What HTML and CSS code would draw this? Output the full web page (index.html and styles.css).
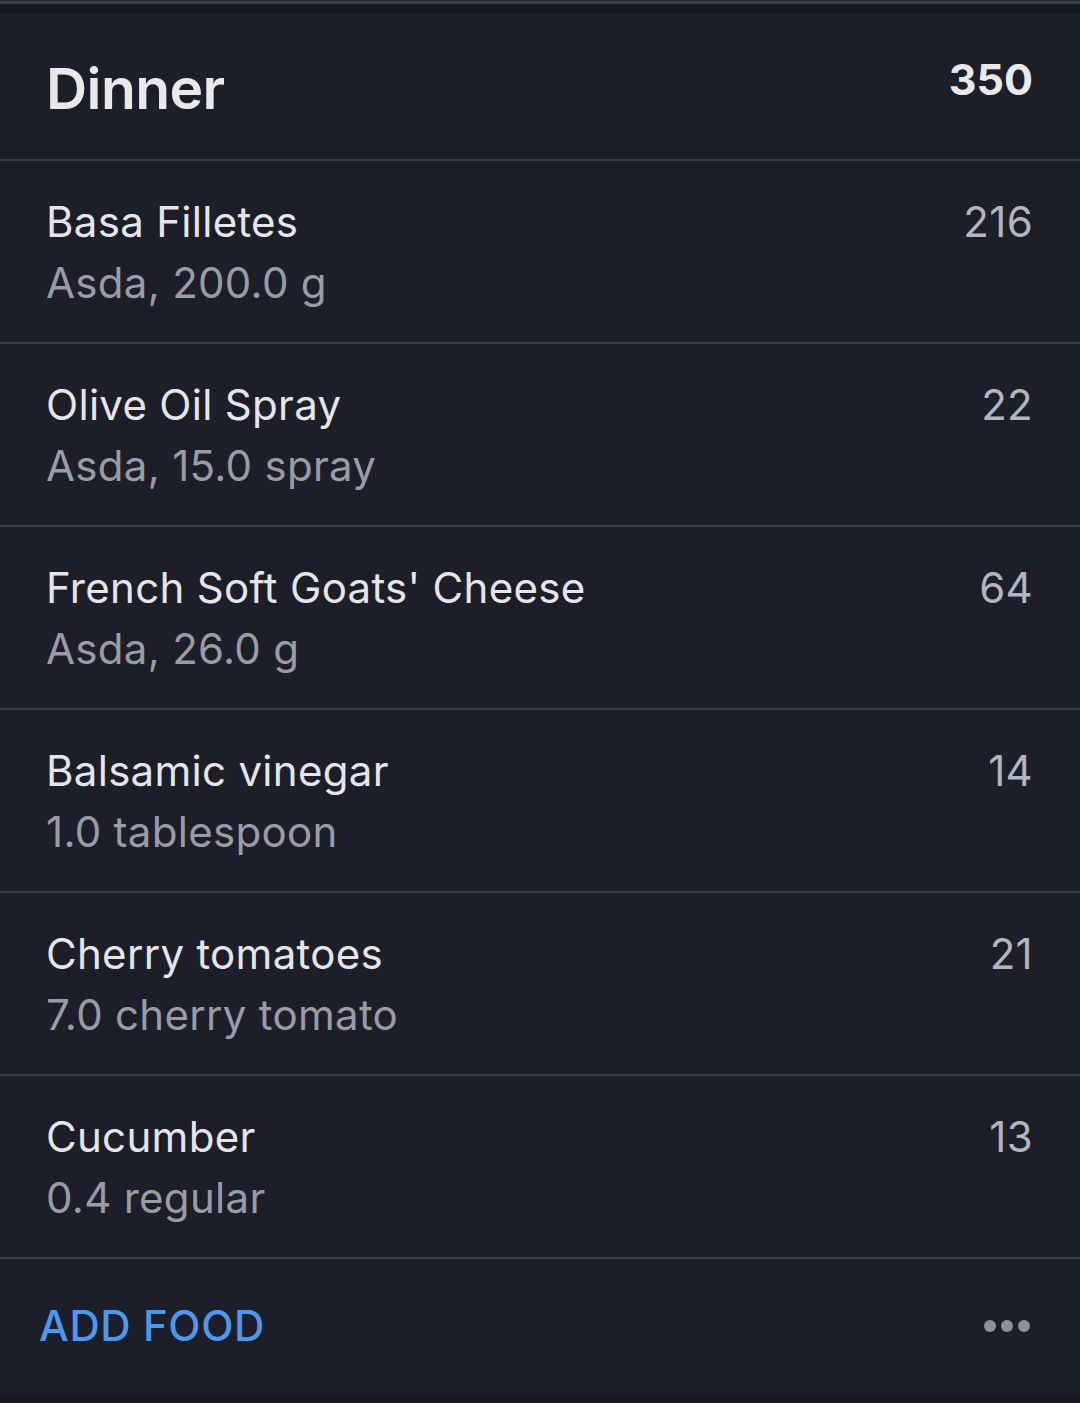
FILE: index.html
```html
<!DOCTYPE html>
<html>
<head>
<meta charset="utf-8">
<link rel="stylesheet" href="styles.css">
</head>
<body>
<div class="topline"></div>
<div class="topstrip"></div>
<section class="meal">
  <header class="meal-head">
    <h1 class="meal-title">Dinner</h1>
    <span class="meal-total">350</span>
  </header>
  <div class="item">
    <div class="item-text">
      <div class="item-name">Basa Filletes</div>
      <div class="item-desc">Asda, 200.0 g</div>
    </div>
    <div class="item-cal">216</div>
  </div>
  <div class="item">
    <div class="item-text">
      <div class="item-name">Olive Oil Spray</div>
      <div class="item-desc">Asda, 15.0 spray</div>
    </div>
    <div class="item-cal">22</div>
  </div>
  <div class="item">
    <div class="item-text">
      <div class="item-name">French Soft Goats' Cheese</div>
      <div class="item-desc">Asda, 26.0 g</div>
    </div>
    <div class="item-cal">64</div>
  </div>
  <div class="item">
    <div class="item-text">
      <div class="item-name">Balsamic vinegar</div>
      <div class="item-desc">1.0 tablespoon</div>
    </div>
    <div class="item-cal">14</div>
  </div>
  <div class="item">
    <div class="item-text">
      <div class="item-name">Cherry tomatoes</div>
      <div class="item-desc">7.0 cherry tomato</div>
    </div>
    <div class="item-cal">21</div>
  </div>
  <div class="item">
    <div class="item-text">
      <div class="item-name">Cucumber</div>
      <div class="item-desc">0.4 regular</div>
    </div>
    <div class="item-cal">13</div>
  </div>
  <footer class="meal-foot">
    <span class="add-food">ADD FOOD</span>
    <span class="more"><i></i><i></i><i></i></span>
  </footer>
</section>
<div class="bottomstrip"></div>
</body>
</html>
```
FILE: styles.css
```css
html, body {
  margin: 0;
  padding: 0;
  background: #1c1e29;
  font-family: Inter, "Noto Sans", sans-serif;
}
body {
  width: 1080px;
  height: 1403px;
  overflow: hidden;
}
.topline {
  height: 4px;
  background: #3a3d49;
  border-top: 1px solid #22242e;
  box-sizing: border-box;
}
.topstrip {
  height: 9px;
  background: #161821;
}
.meal {
  background: #1c1e29;
}
.meal-head {
  display: flex;
  justify-content: space-between;
  align-items: flex-start;
  padding: 40px 47px 35px 46px;
  border-bottom: 2px solid #383b46;
}
.meal-title {
  margin: 0;
  font-size: 57px;
  line-height: 71px;
  font-weight: 600;
  letter-spacing: -0.6px;
  color: #e9e9ec;
}
.meal-total {
  font-size: 43px;
  line-height: 53px;
  font-weight: 700;
  color: #e9e9ec;
}
.item {
  display: flex;
  justify-content: space-between;
  align-items: flex-start;
  padding: 30px 47px 29px 46px;
  border-bottom: 2px solid #383b46;
}
.item-name,
.item-desc,
.item-cal {
  font-size: 42px;
  line-height: 61px;
  letter-spacing: 0.3px;
}
.item-name {
  color: #e6e6e9;
}
.item-desc {
  color: #9a9ca5;
}
.item-cal {
  color: #b3b5bc;
}
.meal-foot {
  display: flex;
  justify-content: space-between;
  align-items: center;
  padding: 41px 47px 41px 39px;
  height: 52px;
}
.add-food {
  font-size: 42px;
  line-height: 52px;
  font-weight: 500;
  letter-spacing: 0.6px;
  color: #4f97ea;
}
.more {
  display: flex;
  gap: 5px;
  margin-right: 3px;
}
.more i {
  width: 12px;
  height: 12px;
  border-radius: 50%;
  background: #8f919a;
}
.bottomstrip {
  height: 10px;
  background: #171821;
}
```
